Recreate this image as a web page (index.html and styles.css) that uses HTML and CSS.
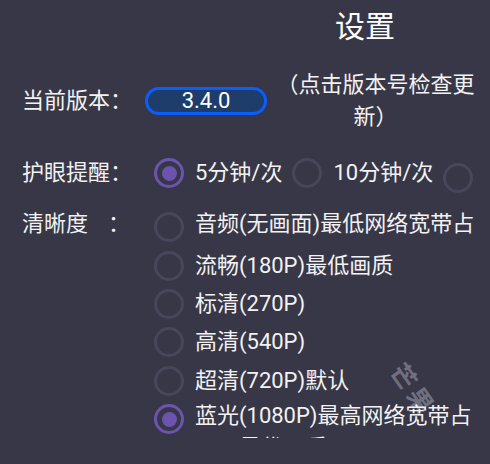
FILE: index.html
```html
<!DOCTYPE html>
<html lang="zh-CN">
<head>
<meta charset="utf-8">
<title>设置</title>
<link rel="stylesheet" href="styles.css">
</head>
<body>
<div class="page">
  <div class="watermark">芒果</div>

  <h1 class="title">设置</h1>

  <div class="row version-row">
    <div class="label">当前版本：</div>
    <button class="version-btn">3.4.0</button>
    <div class="hint">（点击版本号检查更新）</div>
  </div>

  <div class="row eye-row">
    <div class="label">护眼提醒：</div>
    <div class="radio checked"></div>
    <div class="opt-text">5分钟/次</div>
    <div class="radio"></div>
    <div class="opt-text">10分钟/次</div>
    <div class="radio low"></div>
  </div>

  <div class="row quality-row">
    <div class="label line">清晰度<span class="colon">：</span></div>
    <div class="options">
      <div class="option"><div class="radio"></div><div class="opt-box"><div class="opt-label">音频(无画面)最低网络宽带占用</div></div></div>
      <div class="option"><div class="radio"></div><div class="opt-box"><div class="opt-label">流畅(180P)最低画质</div></div></div>
      <div class="option"><div class="radio"></div><div class="opt-box"><div class="opt-label">标清(270P)</div></div></div>
      <div class="option"><div class="radio"></div><div class="opt-box"><div class="opt-label">高清(540P)</div></div></div>
      <div class="option"><div class="radio"></div><div class="opt-box"><div class="opt-label">超清(720P)默认</div></div></div>
      <div class="option"><div class="radio checked"></div><div class="opt-box"><div class="opt-label">蓝光(1080P)最高网络宽带占用，最优画质</div></div></div>
    </div>
  </div>
</div>
</body>
</html>
```

FILE: styles.css
```css
html, body {
  margin: 0;
  padding: 0;
  background: #383747;
}
body {
  width: 490px;
  height: 464px;
  overflow: hidden;
  font-family: Roboto, "Noto Sans CJK SC", sans-serif;
  color: #f2f2f2;
  font-size: 22px;
  line-height: 32px;
}
.page {
  position: relative;
  height: 464px;
}
.title {
  position: relative;
  z-index: 1;
  margin: 0;
  padding: 5px 0 0 335px;
  font-size: 30px;
  line-height: 43px;
  font-weight: normal;
  color: #ffffff;
}
.row {
  position: relative;
  z-index: 1;
  display: flex;
  align-items: center;
}
.label {
  width: 154px;
  padding-left: 22px;
  box-sizing: border-box;
  flex: none;
  white-space: nowrap;
}
.version-row {
  margin-top: 21px;
}
.version-row .label {
  width: 145px;
}
.version-btn {
  width: 122px;
  height: 28px;
  box-sizing: border-box;
  border: 3px solid #0b5dfc;
  border-radius: 14px;
  background: #1f3d6b;
  color: #ffffff;
  font-family: Roboto, "Noto Sans CJK SC", sans-serif;
  font-size: 22px;
  line-height: 22px;
  padding: 0;
  flex: none;
}
.hint {
  width: 209px;
  margin-left: 4px;
  text-align: center;
  flex: none;
}
.eye-row {
  margin-top: 20px;
  height: 40px;
}
.radio {
  width: 30px;
  height: 30px;
  box-sizing: border-box;
  border: 3px solid #48465a;
  border-radius: 50%;
  flex: none;
  margin-right: 11px;
  position: relative;
}
.radio.checked {
  border-color: #6b54ae;
}
.radio.checked::after {
  content: "";
  position: absolute;
  left: 4.5px;
  top: 4.5px;
  width: 15px;
  height: 15px;
  border-radius: 50%;
  background: #6b54ae;
}
.radio.low {
  margin-top: 9px;
}
.opt-text {
  margin-right: 10px;
  white-space: nowrap;
}
.quality-row {
  margin-top: 15px;
  align-items: flex-start;
}
.colon {
  margin-left: 20px;
}
.options {
  flex: 1;
  padding-right: 6px;
  min-width: 0;
}
.option {
  display: flex;
  align-items: center;
  height: 38.4px;
}
.opt-box {
  flex: 1;
  height: 38.4px;
  overflow: hidden;
  display: flex;
  flex-direction: column;
  min-width: 0;
}
.opt-label {
  margin: auto 0;
  flex: none;
}
.watermark {
  position: absolute;
  z-index: 0;
  left: 396px;
  top: 354px;
  font-size: 25px;
  line-height: 25px;
  color: rgba(150, 150, 168, 0.62);
  transform: rotate(55deg);
  transform-origin: left center;
  letter-spacing: 4px;
  font-weight: bold;
  white-space: nowrap;
  pointer-events: none;
}
```
